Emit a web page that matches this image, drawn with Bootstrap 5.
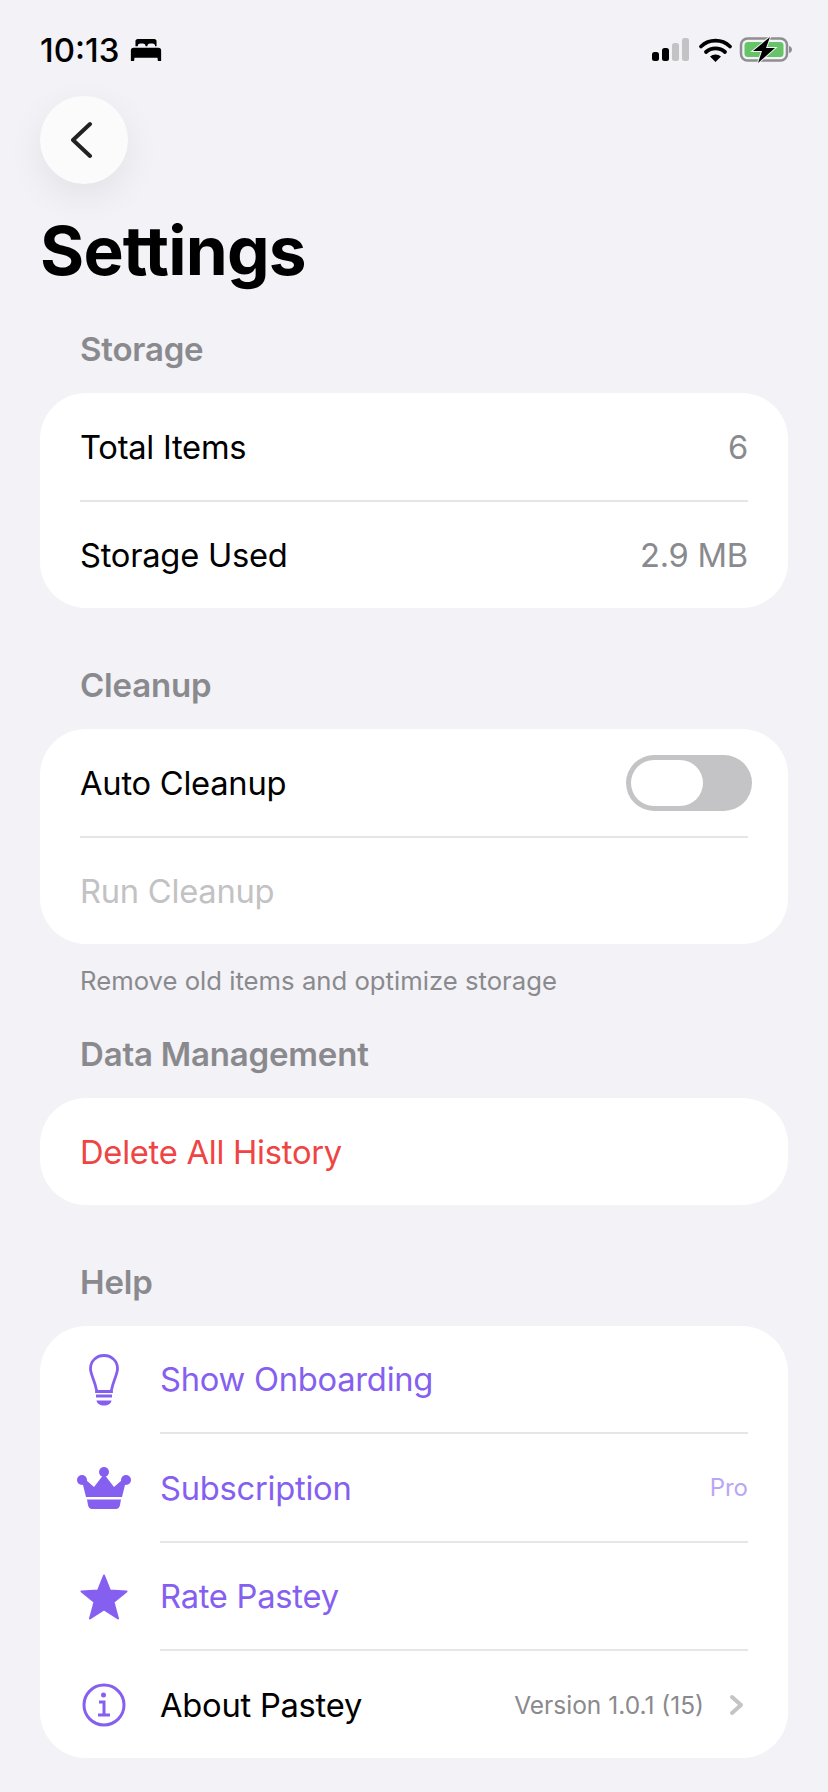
<!DOCTYPE html>
<html lang="en">
<head>
  <meta charset="UTF-8" />
  <meta name="viewport" content="width=device-width, initial-scale=1.0" />
  <title>Settings</title>
  <link href="https://cdn.jsdelivr.net/npm/bootstrap@5.3.0/dist/css/bootstrap.min.css" rel="stylesheet">
  <style>
    body {
      background-color: #f2f2f7;
      font-family: Inter, "Liberation Sans", sans-serif;
      color: #000;
    }
    .phone-page {
      width: 828px;
      height: 1792px;
      padding: 0 40px;
      overflow: hidden;
    }
    .status-row {
      height: 96px;
      padding-top: 34px;
      align-items: flex-start;
    }
    .status-time {
      font-size: 33px;
      line-height: 32px;
      font-weight: 500;
      letter-spacing: 0;
    }
    .status-left { gap: 11px; }
    .status-icons { margin: 3px -6px 0 0; }
    .back-btn {
      width: 88px;
      height: 88px;
      padding: 0;
      border: 0;
      border-radius: 50%;
      background: #fbfbfc;
      box-shadow: 0 12px 36px rgba(0,0,0,0.07);
    }
    .page-title {
      font-size: 67.5px;
      line-height: 68px;
      font-weight: 700;
      letter-spacing: -0.8px;
      margin: 33px 0 46px;
    }
    .sect { margin-bottom: 59px; }
    .sect-tight { margin-bottom: 40px; }
    .sect-title {
      font-size: 33px;
      line-height: 36px;
      font-weight: 600;
      color: #8a8a8e;
      padding-left: 40px;
      margin: 0 0 26px;
      letter-spacing: -0.2px;
    }
    .set-card {
      border: 0;
      border-radius: 46px;
      background: #fff;
      overflow: hidden;
    }
    .set-row {
      height: 106.5px;
      padding: 2px 40px 0 40px;
      font-size: 32.7px;
      letter-spacing: -0.25px;
    }
    .set-rule {
      height: 2px;
      margin: 0 40px;
      background: #e6e6e8;
    }
    .set-rule-icon { margin-left: 120px; }
    .row-icon {
      flex: 0 0 120px;
      margin-left: -40px;
      display: flex;
      justify-content: center;
      padding-left: 8px;
    }
    .row-value { color: #8a8a8e; }
    .txt-muted-row { color: #c2c2c4; }
    .txt-purple { color: #8560f0; }
    .txt-red { color: #ef4444; }
    .pro-tag { font-size: 24px; color: #b9a6f6; letter-spacing: 0; }
    .version-tag { font-size: 24.5px; color: #8a8a8e; letter-spacing: 0; margin-right: 25px; }
    .chevron-icon { margin-right: 4px; }
    .sect-note {
      font-size: 25.7px;
      line-height: 30px;
      color: #8a8a8e;
      padding-left: 40px;
      margin: 22px 0 0;
      letter-spacing: 0;
    }
    .toggle-track {
      width: 126px;
      height: 56px;
      margin-right: -4px;
      padding: 5px;
      border-radius: 28px;
      background: #c4c4c6;
    }
    .toggle-knob {
      display: block;
      width: 72px;
      height: 46px;
      border-radius: 23px;
      background: #fff;
    }
  </style>
</head>
<body>
  <div class="phone-page">
    <div class="status-row d-flex justify-content-between">
      <div class="status-left d-flex align-items-center">
        <span class="status-time">10:13</span>
        <svg width="32" height="22" viewBox="0 0 33 24" fill="#000">
          <path d="M5 2.500C5 1 6 0 7.500 0h18C27 0 28 1 28 2.500V8h-1.500c0-2-1-3-3-3h-2.500c-2 0-3 1-3 3h-2c0-2-1-3-3-3H10.500c-2 0-3 1-3 3H5z"/>
          <path d="M3 9.500h27c2 0 3 1 3 3V24h-3.500l-.5-3.500H4L3.500 24H0V12.500c0-2 1-3 3-3z"/>
        </svg>
      </div>
      <svg width="142" height="26" viewBox="0 0 142 26" class="status-icons">
        <rect x="0" y="15" width="7" height="9" rx="2.500" fill="#000"/>
        <rect x="10" y="11" width="7" height="13" rx="2.500" fill="#000"/>
        <rect x="20" y="6" width="7" height="18" rx="2.500" fill="#c3c3c6"/>
        <rect x="30" y="1" width="7" height="23" rx="2.500" fill="#c3c3c6"/>
        <path d="M49 9.500a21 21 0 0 1 29 0M54 15a14 14 0 0 1 19 0" fill="none" stroke="#000" stroke-width="3.800" stroke-linecap="round"/>
        <path d="M58 19.500a8.500 8.500 0 0 1 11 0L63.500 25z" fill="#000"/>
        <rect x="89" y="1.500" width="46" height="22" rx="6.500" fill="none" stroke="#8f8f91" stroke-width="2.500"/>
        <rect x="92.500" y="5" width="39" height="15" rx="3.500" fill="#65c466"/>
        <path d="M137 9c2 .5 3 2 3 3.500s-1 3-3 3.500z" fill="#8f8f91"/>
        <path d="M118 0 101 14h9l-4 12 17-15h-9l4-11z" fill="#000" stroke="#f2f2f7" stroke-width="2" paint-order="stroke"/>
      </svg>
    </div>

    <button type="button" class="back-btn btn d-flex align-items-center justify-content-center">
      <svg width="26" height="40" viewBox="0 0 26 40" fill="none" stroke="#222" stroke-width="4" stroke-linecap="round" stroke-linejoin="round">
        <path d="M19 4 2 20l17 16"/>
      </svg>
    </button>

    <h1 class="page-title">Settings</h1>

    <section class="sect">
      <h2 class="sect-title">Storage</h2>
      <div class="set-card card">
        <div class="set-row d-flex align-items-center justify-content-between">
          <span>Total Items</span><span class="row-value">6</span>
        </div>
        <div class="set-rule"></div>
        <div class="set-row d-flex align-items-center justify-content-between">
          <span>Storage Used</span><span class="row-value">2.9 MB</span>
        </div>
      </div>
    </section>

    <section class="sect-tight">
      <h2 class="sect-title">Cleanup</h2>
      <div class="set-card card">
        <div class="set-row d-flex align-items-center justify-content-between">
          <span>Auto Cleanup</span>
          <span class="toggle-track"><span class="toggle-knob"></span></span>
        </div>
        <div class="set-rule"></div>
        <div class="set-row d-flex align-items-center">
          <span class="txt-muted-row">Run Cleanup</span>
        </div>
      </div>
      <p class="sect-note">Remove old items and optimize storage</p>
    </section>

    <section class="sect">
      <h2 class="sect-title">Data Management</h2>
      <div class="set-card card">
        <div class="set-row d-flex align-items-center">
          <span class="txt-red">Delete All History</span>
        </div>
      </div>
    </section>

    <section>
      <h2 class="sect-title">Help</h2>
      <div class="set-card card">
        <div class="set-row d-flex align-items-center">
          <span class="row-icon">
            <svg width="30" height="52" viewBox="0 0 30 52" fill="none" stroke="#8560f0" stroke-width="2.800">
              <path d="M15 1.500C7 1.500 1.500 7.500 1.500 14.500c0 6 4 11 6 21.500v1.500h15V36c2-10.500 6-15.500 6-21.500C28.500 7.500 23 1.500 15 1.500z"/>
              <path d="M7 42h16"/>
              <path d="M7.500 46.500h15C22 50 19 51.500 15 51.500S8 50 7.500 46.500z" fill="#8560f0" stroke="none"/>
            </svg>
          </span>
          <span class="txt-purple">Show Onboarding</span>
        </div>
        <div class="set-rule set-rule-icon"></div>
        <div class="set-row d-flex align-items-center">
          <span class="row-icon">
            <svg width="54" height="42" viewBox="0 0 54 42" fill="#8560f0">
              <circle cx="5" cy="13" r="5"/><circle cx="49" cy="13" r="5"/><circle cx="27" cy="5" r="5"/>
              <path d="M27 7 37 20 45 13 49 14 45 30H9L5 14 9 13 17 20z"/>
              <path d="M10 32.500h34l-1 5.500c-.4 2.500-2 4-4 4H15c-2 0-3.600-1.500-4-4z"/>
            </svg>
          </span>
          <span class="txt-purple">Subscription</span>
          <span class="pro-tag ms-auto">Pro</span>
        </div>
        <div class="set-rule set-rule-icon"></div>
        <div class="set-row d-flex align-items-center">
          <span class="row-icon">
            <svg width="48" height="46" viewBox="0 0 48 46" fill="#8560f0" stroke="#8560f0" stroke-width="2" stroke-linejoin="round">
              <path d="M24 1.500 30 16.500 46.500 17.500 33.500 28 38 44.500 24 35.500 10 44.500 14.500 28 1.500 17.500 18 16.500z"/>
            </svg>
          </span>
          <span class="txt-purple">Rate Pastey</span>
        </div>
        <div class="set-rule set-rule-icon"></div>
        <div class="set-row d-flex align-items-center">
          <span class="row-icon">
            <svg width="44" height="44" viewBox="0 0 44 44" fill="none" stroke="#8560f0" stroke-width="3">
              <circle cx="22" cy="22" r="20"/>
              <circle cx="21.500" cy="12" r="2.500" fill="#8560f0" stroke="none"/>
              <path d="M17 19h5v13M16 32h12"/>
            </svg>
          </span>
          <span>About Pastey</span>
          <span class="version-tag ms-auto">Version 1.0.1 (15)</span>
          <svg class="chevron-icon" width="15" height="22" viewBox="0 0 15 22" fill="none" stroke="#c4c4c6" stroke-width="4" stroke-linecap="round" stroke-linejoin="round">
            <path d="M3 3 12 11 3 19"/>
          </svg>
        </div>
      </div>
    </section>
  </div>
  <script src="https://cdn.jsdelivr.net/npm/bootstrap@5.3.0/dist/js/bootstrap.bundle.min.js"></script>
</body>
</html>
